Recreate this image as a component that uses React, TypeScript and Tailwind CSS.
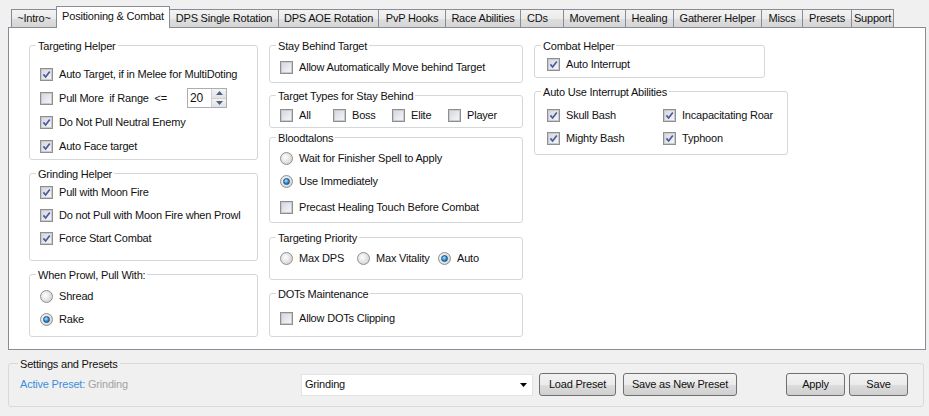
import type { ReactNode } from "react";

type Tab = { label: string; w: number; active?: boolean; left?: boolean };

const tabs: readonly Tab[] = [
  { label: "~Intro~", w: 46 },
  { label: "Positioning & Combat", w: 114, active: true },
  { label: "DPS Single Rotation", w: 110 },
  { label: "DPS AOE Rotation", w: 101 },
  { label: "PvP Hooks", w: 68 },
  { label: "Race Abilities", w: 76 },
  { label: "CDs", w: 44, left: true },
  { label: "Movement", w: 63 },
  { label: "Healing", w: 49 },
  { label: "Gatherer Helper", w: 89 },
  { label: "Miscs", w: 42 },
  { label: "Presets", w: 50 },
  { label: "Support", w: 43 },
];

function CheckBox({ checked }: { checked?: boolean }) {
  return (
    <span className="flex h-[13px] w-[13px] shrink-0 items-center justify-center border border-[#8e8f8f] bg-white">
      <span className="flex h-[11px] w-[11px] items-center justify-center border border-[#c9cacf] bg-[linear-gradient(135deg,#d6d8e0,#f5f5f8)]">
        {checked ? (
          <svg width="9" height="9" viewBox="0 0 9 9">
            <path d="M1.4 4.4 L3.6 7 L7.8 1.4" fill="none" stroke="#4b5b98" strokeWidth="1.7" />
          </svg>
        ) : null}
      </span>
    </span>
  );
}

function Radio({ checked }: { checked?: boolean }) {
  return (
    <span className="flex h-[13px] w-[13px] shrink-0 items-center justify-center rounded-full border border-[#8e8f8f] bg-[radial-gradient(circle_at_40%_40%,#ffffff,#d2d2d2_80%)]">
      {checked ? (
        <span className="h-[7px] w-[7px] rounded-full border border-[#1d4f7e] bg-[radial-gradient(circle_at_40%_35%,#b5e6ff,#2a8ad2_55%,#0f4f8a)]" />
      ) : null}
    </span>
  );
}

function Check({ label, checked, className = "" }: { label: string; checked?: boolean; className?: string }) {
  return (
    <div className={`flex h-[23px] items-center gap-[6px] ${className}`}>
      <CheckBox checked={checked} />
      <span className="whitespace-pre">{label}</span>
    </div>
  );
}

function Option({ label, checked, className = "" }: { label: string; checked?: boolean; className?: string }) {
  return (
    <div className={`flex h-[23px] items-center gap-[6px] ${className}`}>
      <Radio checked={checked} />
      <span>{label}</span>
    </div>
  );
}

function Group({ title, className = "", children }: { title: string; className?: string; children: ReactNode }) {
  return (
    <div className={`relative rounded-[3px] border border-[#d3d7da] ${className}`}>
      <span className="absolute -top-[7px] left-[6px] bg-white px-[2px] leading-[14px]">{title}</span>
      {children}
    </div>
  );
}

function Button({ label, className = "" }: { label: string; className?: string }) {
  return (
    <button className={`flex h-[23px] items-center justify-center rounded-[3px] border border-[#707070] bg-[linear-gradient(#f2f2f2,#ebebeb_50%,#dddddd_51%,#cfcfcf)] ${className}`}>
      {label}
    </button>
  );
}

export default function App() {
  return (
    <div className="h-[416px] w-[929px] overflow-hidden bg-[#f0f0f0] text-[11px] tracking-[-0.2px] text-[#111] [font-family:'Liberation_Sans',Arial,sans-serif]">
      {/* tab strip */}
      <div className="flex h-[27px] items-end pl-[11px]">
        {tabs.map((t, i) => (
          <div
            key={t.label}
            style={{ width: t.w }}
            className={`flex items-center border border-b-0 border-[#898c95] ${i > 0 ? "-ml-px" : ""} ${
              t.left ? "justify-start pl-[6px]" : "justify-center"
            } ${
              t.active
                ? "relative z-10 -mb-px h-[22px] bg-white pb-[2px]"
                : "h-[18px] bg-[linear-gradient(#f3f3f3,#ebebeb_50%,#dedede_51%,#d6d6d6)]"
            }`}
          >
            {t.label}
          </div>
        ))}
      </div>

      {/* tab page */}
      <div className="ml-[8px] flex h-[323px] w-[918px] gap-[11px] border border-[#898c95] bg-white pl-[20px] pt-[17px]">
        <div className="flex w-[229px] flex-col gap-[13px]">
          <Group title="Targeting Helper" className="h-[115px] pl-[10px] pt-[16px]">
            <Check label="Auto Target, if in Melee for MultiDoting" checked className="h-[24px]" />
            <div className="flex h-[24px] items-center">
              <CheckBox />
              <span className="ml-[6px] w-[128px] whitespace-pre">Pull More  if Range  {"<="}</span>
              <div className="flex h-[20px] w-[40px] items-center border border-[#abadb3] bg-white">
                <span className="flex-1 pl-[2px] text-[12px]">20</span>
                <div className="flex h-[18px] w-[15px] flex-col border-l border-[#d0d0d0]">
                  <span className="flex flex-1 items-center justify-center border-b border-[#d0d0d0] bg-[linear-gradient(#f4f4f4,#e2e2e2)]">
                    <svg width="7" height="4" viewBox="0 0 7 4">
                      <path d="M0 4 L3.5 0 L7 4 Z" fill="#4d6185" />
                    </svg>
                  </span>
                  <span className="flex flex-1 items-center justify-center bg-[linear-gradient(#f4f4f4,#e2e2e2)]">
                    <svg width="7" height="4" viewBox="0 0 7 4">
                      <path d="M0 0 L3.5 4 L7 0 Z" fill="#4d6185" />
                    </svg>
                  </span>
                </div>
              </div>
            </div>
            <Check label="Do Not Pull Neutral Enemy" checked className="h-[24px]" />
            <Check label="Auto Face target" checked className="h-[24px]" />
          </Group>
          <Group title="Grinding Helper" className="h-[88px] pl-[10px] pt-[7px]">
            <Check label="Pull with Moon Fire" checked />
            <Check label="Do not Pull with Moon Fire when Prowl" checked />
            <Check label="Force Start Combat" checked />
          </Group>
          <Group title="When Prowl, Pull With:" className="h-[63px] pl-[10px] pt-[10px]">
            <Option label="Shread" />
            <Option label="Rake" checked />
          </Group>
        </div>

        <div className="flex w-[254px] flex-col">
          <Group title="Stay Behind Target" className="h-[38px] pl-[10px] pt-[10px]">
            <Check label="Allow Automatically Move behind Target" />
          </Group>
          <Group title="Target Types for Stay Behind" className="mt-[12px] flex h-[33px] pl-[10px] pt-[8px]">
            <Check label="All" className="w-[53px]" />
            <Check label="Boss" className="w-[59px]" />
            <Check label="Elite" className="w-[56px]" />
            <Check label="Player" />
          </Group>
          <Group title="Bloodtalons" className="mt-[9px] h-[86px] pl-[10px] pt-[9px]">
            <Option label="Wait for Finisher Spell to Apply" />
            <Option label="Use Immediately" checked />
            <Check label="Precast Healing Touch Before Combat" className="mt-[3px]" />
          </Group>
          <Group title="Targeting Priority" className="mt-[14px] flex h-[43px] pl-[10px] pt-[9px]">
            <Option label="Max DPS" className="w-[77px]" />
            <Option label="Max Vitality" className="w-[81px]" />
            <Option label="Auto" checked />
          </Group>
          <Group title="DOTs Maintenance" className="mt-[13px] h-[44px] pl-[10px] pt-[13px]">
            <Check label="Allow DOTs Clipping" />
          </Group>
        </div>

        <div className="flex w-[254px] flex-col">
          <Group title="Combat Helper" className="h-[33px] w-[231px] pl-[12px] pt-[7px]">
            <Check label="Auto Interrupt" checked />
          </Group>
          <Group title="Auto Use Interrupt Abilities" className="mt-[13px] grid h-[64px] grid-cols-[116px_1fr] content-start pl-[12px] pt-[12px]">
            <Check label="Skull Bash" checked />
            <Check label="Incapacitating Roar" checked />
            <Check label="Mighty Bash" checked />
            <Check label="Typhoon" checked />
          </Group>
        </div>
      </div>

      {/* settings and presets */}
      <div className="relative ml-[8px] mt-[13px] h-[44px] w-[916px] rounded-[3px] border border-[#d9d9d9] pl-[11px] pt-[9px]">
        <span className="absolute -top-[7px] left-[9px] bg-[#f0f0f0] px-[2px] leading-[14px]">Settings and Presets</span>
        <div className="flex h-[23px] items-center">
          <span className="w-[281px]">
            <span className="text-[#3c8fdc]">Active Preset: </span>
            <span className="text-[#a3a3a3]">Grinding</span>
          </span>
          <div className="flex h-[22px] w-[232px] items-center justify-between border border-[#e3e3e3] bg-white pl-[3px] pr-[5px]">
            <span>Grinding</span>
            <svg width="7" height="4" viewBox="0 0 7 4">
              <path d="M0 0 L7 0 L3.5 4 Z" fill="#000" />
            </svg>
          </div>
          <Button label="Load Preset" className="ml-[6px] w-[77px]" />
          <Button label="Save as New Preset" className="ml-[7px] w-[114px]" />
          <Button label="Apply" className="ml-[49px] w-[59px]" />
          <Button label="Save" className="ml-[4px] w-[59px]" />
        </div>
      </div>
    </div>
  );
}
